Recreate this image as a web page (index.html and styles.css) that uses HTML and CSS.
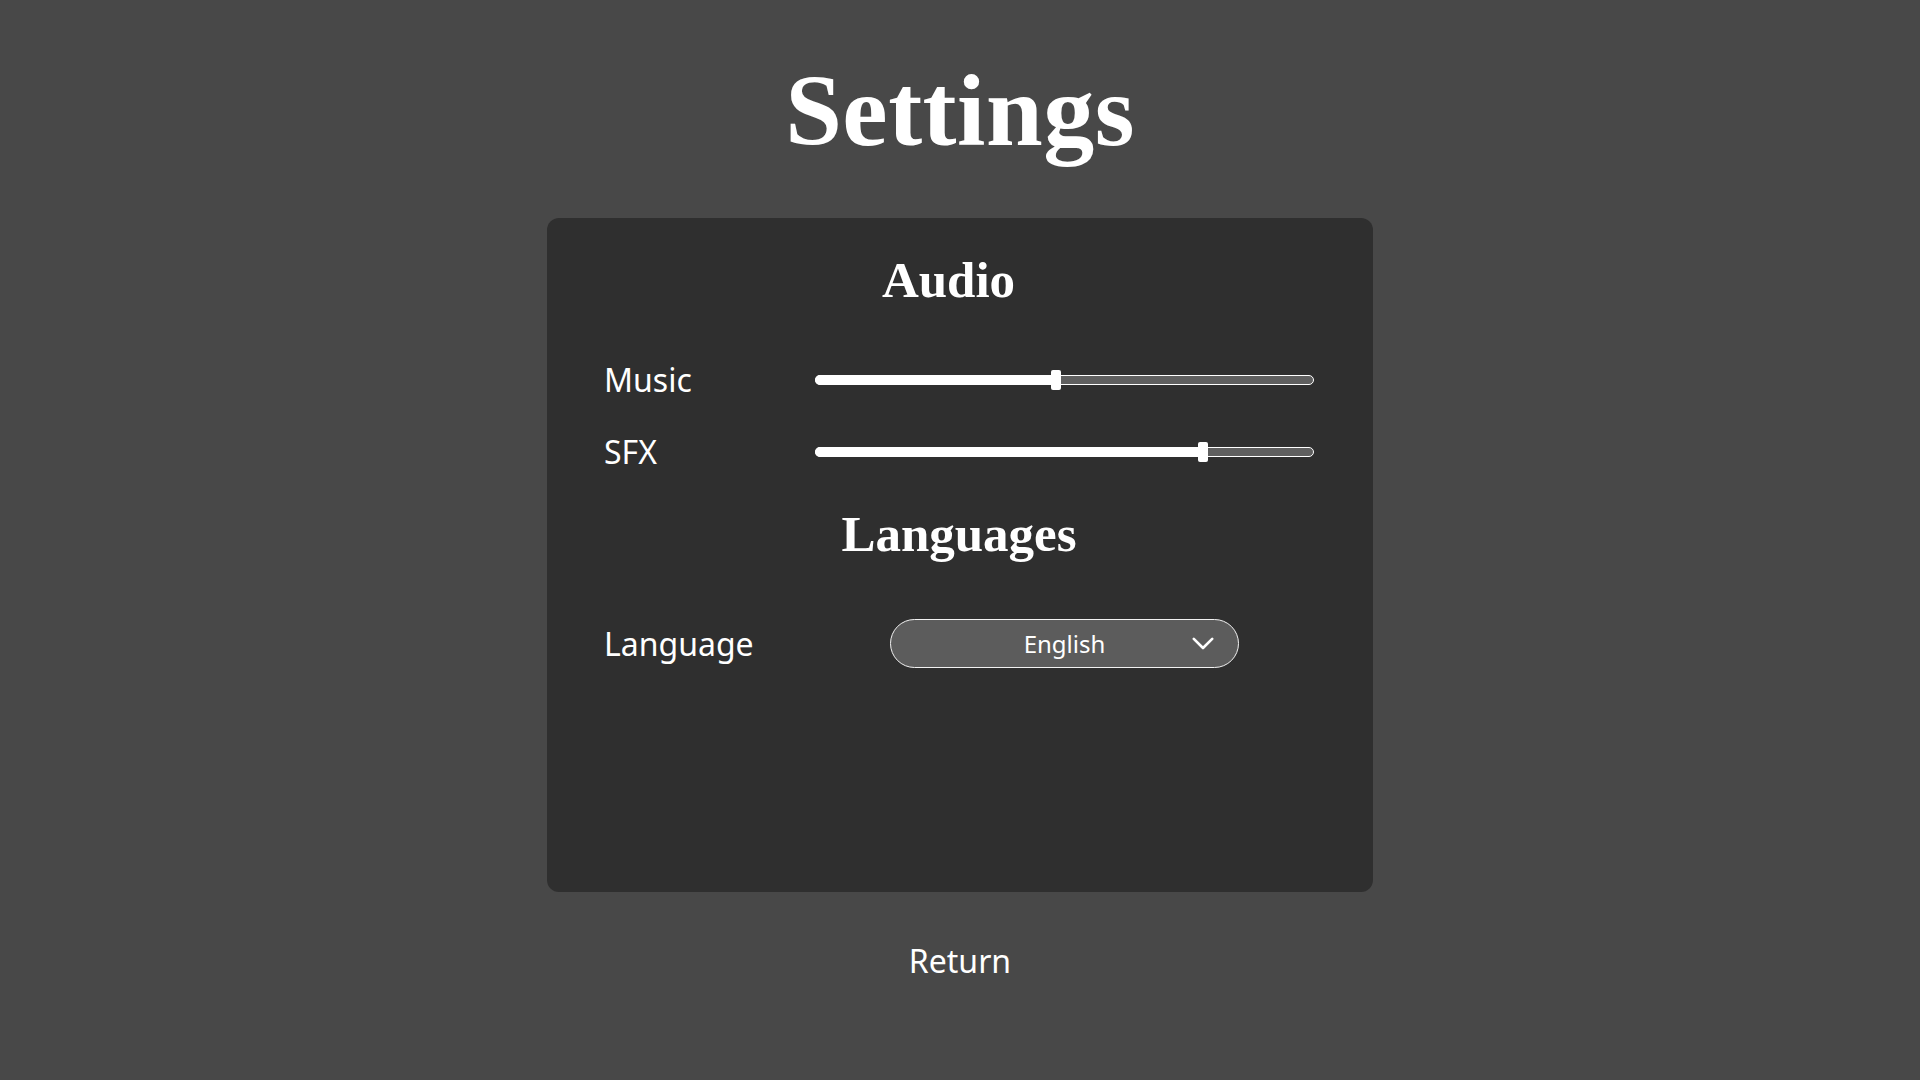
FILE: index.html
```html
<!DOCTYPE html>
<html lang="en">
<head>
<meta charset="utf-8">
<title>Settings</title>
<link rel="stylesheet" href="styles.css">
</head>
<body>
<main class="page">
  <h1 class="title">Settings</h1>
  <section class="panel">
    <h2 class="heading heading--audio">Audio</h2>
    <div class="row row--music">
      <span class="label">Music</span>
      <div class="control">
        <div class="slider">
          <div class="slider__fill" style="width:48.3%"></div>
          <div class="slider__thumb" style="left:48.3%"></div>
        </div>
      </div>
    </div>
    <div class="row row--sfx">
      <span class="label">SFX</span>
      <div class="control">
        <div class="slider">
          <div class="slider__fill" style="width:77.9%"></div>
          <div class="slider__thumb" style="left:77.9%"></div>
        </div>
      </div>
    </div>
    <h2 class="heading heading--lang">Languages</h2>
    <div class="row row--lang">
      <span class="label">Language</span>
      <div class="control control--center">
        <div class="select">
          <span class="select__value">English</span>
          <svg class="select__chevron" width="22" height="13" viewBox="0 0 22 13"><polyline points="1.8,1.8 11,11 20.2,1.8" fill="none" stroke="#ffffff" stroke-width="2.6" stroke-linecap="round" stroke-linejoin="round"/></svg>
        </div>
      </div>
    </div>
  </section>
  <div class="return">Return</div>
</main>
</body>
</html>
```
FILE: styles.css
```css
html, body {
  margin: 0;
  padding: 0;
  background: #484848;
}
body {
  color: #ffffff;
  font-family: "Noto Sans", "Open Sans", sans-serif;
  width: 1920px;
  height: 1080px;
  overflow: hidden;
}
.page {
  display: flex;
  flex-direction: column;
  align-items: center;
}
.title {
  margin: 60px 0 0;
  font-family: "Liberation Serif", "DejaVu Serif", serif;
  font-weight: 700;
  font-size: 102px;
  line-height: 102px;
  letter-spacing: 0.5px;
}
.panel {
  box-sizing: border-box;
  margin-top: 56px;
  width: 826px;
  height: 674px;
  padding: 36px 59px 0 57px;
  background: #2f2f2f;
  border-radius: 12px;
  display: flex;
  flex-direction: column;
}
.heading {
  margin: 0;
  text-align: center;
  font-family: "Liberation Serif", "DejaVu Serif", serif;
  font-weight: 700;
  font-size: 51px;
  line-height: 52px;
}
.heading--audio {
  padding-right: 21px;
}
.heading--lang {
  margin-top: 36px;
}
.row {
  display: flex;
  align-items: center;
}
.row--music {
  margin-top: 54px;
  height: 40px;
}
.row--sfx {
  margin-top: 32px;
  height: 40px;
}
.row--lang {
  margin-top: 59px;
  height: 49px;
}
.label {
  width: 211px;
  flex: none;
  font-size: 32px;
  line-height: 40px;
}
.control {
  flex: 1;
  display: flex;
  align-items: center;
}
.control--center {
  justify-content: center;
}
.slider {
  position: relative;
  width: 100%;
  height: 10px;
  box-sizing: border-box;
  border: 1px solid #ffffff;
  border-radius: 5px;
  background: #5f5f5f;
}
.slider__fill {
  position: absolute;
  left: -1px;
  top: -1px;
  bottom: -1px;
  background: #ffffff;
  border-radius: 5px 0 0 5px;
}
.slider__thumb {
  position: absolute;
  top: 50%;
  width: 10px;
  height: 20px;
  margin-left: -5px;
  margin-top: -10px;
  background: #ffffff;
  border-radius: 2px;
}
.select {
  position: relative;
  box-sizing: border-box;
  width: 349px;
  height: 49px;
  border: 1px solid #f2f2f2;
  border-radius: 25px;
  background: #5c5c5c;
  display: flex;
  align-items: center;
  justify-content: center;
}
.select__value {
  font-size: 24px;
  line-height: 30px;
}
.select__chevron {
  position: absolute;
  right: 24px;
  top: 17px;
}
.return {
  margin-top: 49px;
  font-size: 32px;
  line-height: 40px;
}
```
